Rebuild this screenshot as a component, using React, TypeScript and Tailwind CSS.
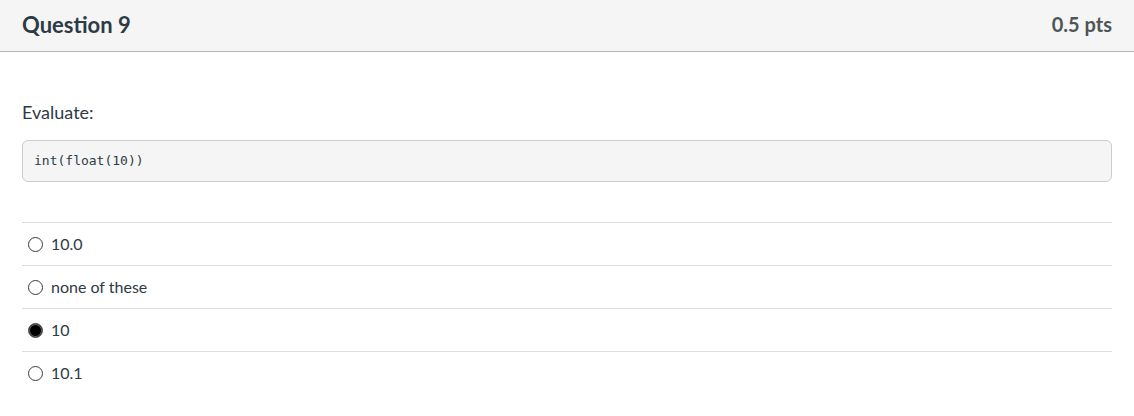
const answers = [
  { label: "10.0", checked: false },
  { label: "none of these", checked: false },
  { label: "10", checked: true },
  { label: "10.1", checked: false },
];

export default function App() {
  return (
    <main className="w-[1134px] min-h-[416px] bg-white text-[#2d3b45] font-['Lato','Liberation_Sans',sans-serif]">
      <header className="h-[52px] bg-[#f5f5f5] border-b border-[#b4b4b4] px-[22px] pb-[3px] flex items-center justify-between">
        <h2 className="text-[22px] font-bold text-[#2d3b45]">Question 9</h2>
        <span className="text-[20px] font-bold text-[#4e5558]">0.5 pts</span>
      </header>
      <section className="px-[22px] pt-[48px]">
        <p className="text-[18px] leading-[24px]">Evaluate:</p>
        <pre className="mt-[16px] h-[42px] flex items-center px-[11px] bg-[#f5f5f5] border border-[#c7cdd1] rounded-[6px] text-[13px] text-[#2d3b45] font-['DejaVu_Sans_Mono',monospace]">
          int(float(10))
        </pre>
        <div className="mt-[40px]">
          {answers.map((a) => (
            <div key={a.label} className="h-[43px] border-t border-[#dddddd] flex items-center pl-[6px] gap-[8px]">
              {a.checked ? (
                <span className="w-[15px] h-[15px] rounded-full bg-black border border-[#555] shadow-[inset_0_0_0_1px_#666]" />
              ) : (
                <span className="w-[15px] h-[15px] rounded-full bg-white border border-[#3c3c3c]" />
              )}
              <span className="text-[16px]">{a.label}</span>
            </div>
          ))}
        </div>
      </section>
    </main>
  );
}
